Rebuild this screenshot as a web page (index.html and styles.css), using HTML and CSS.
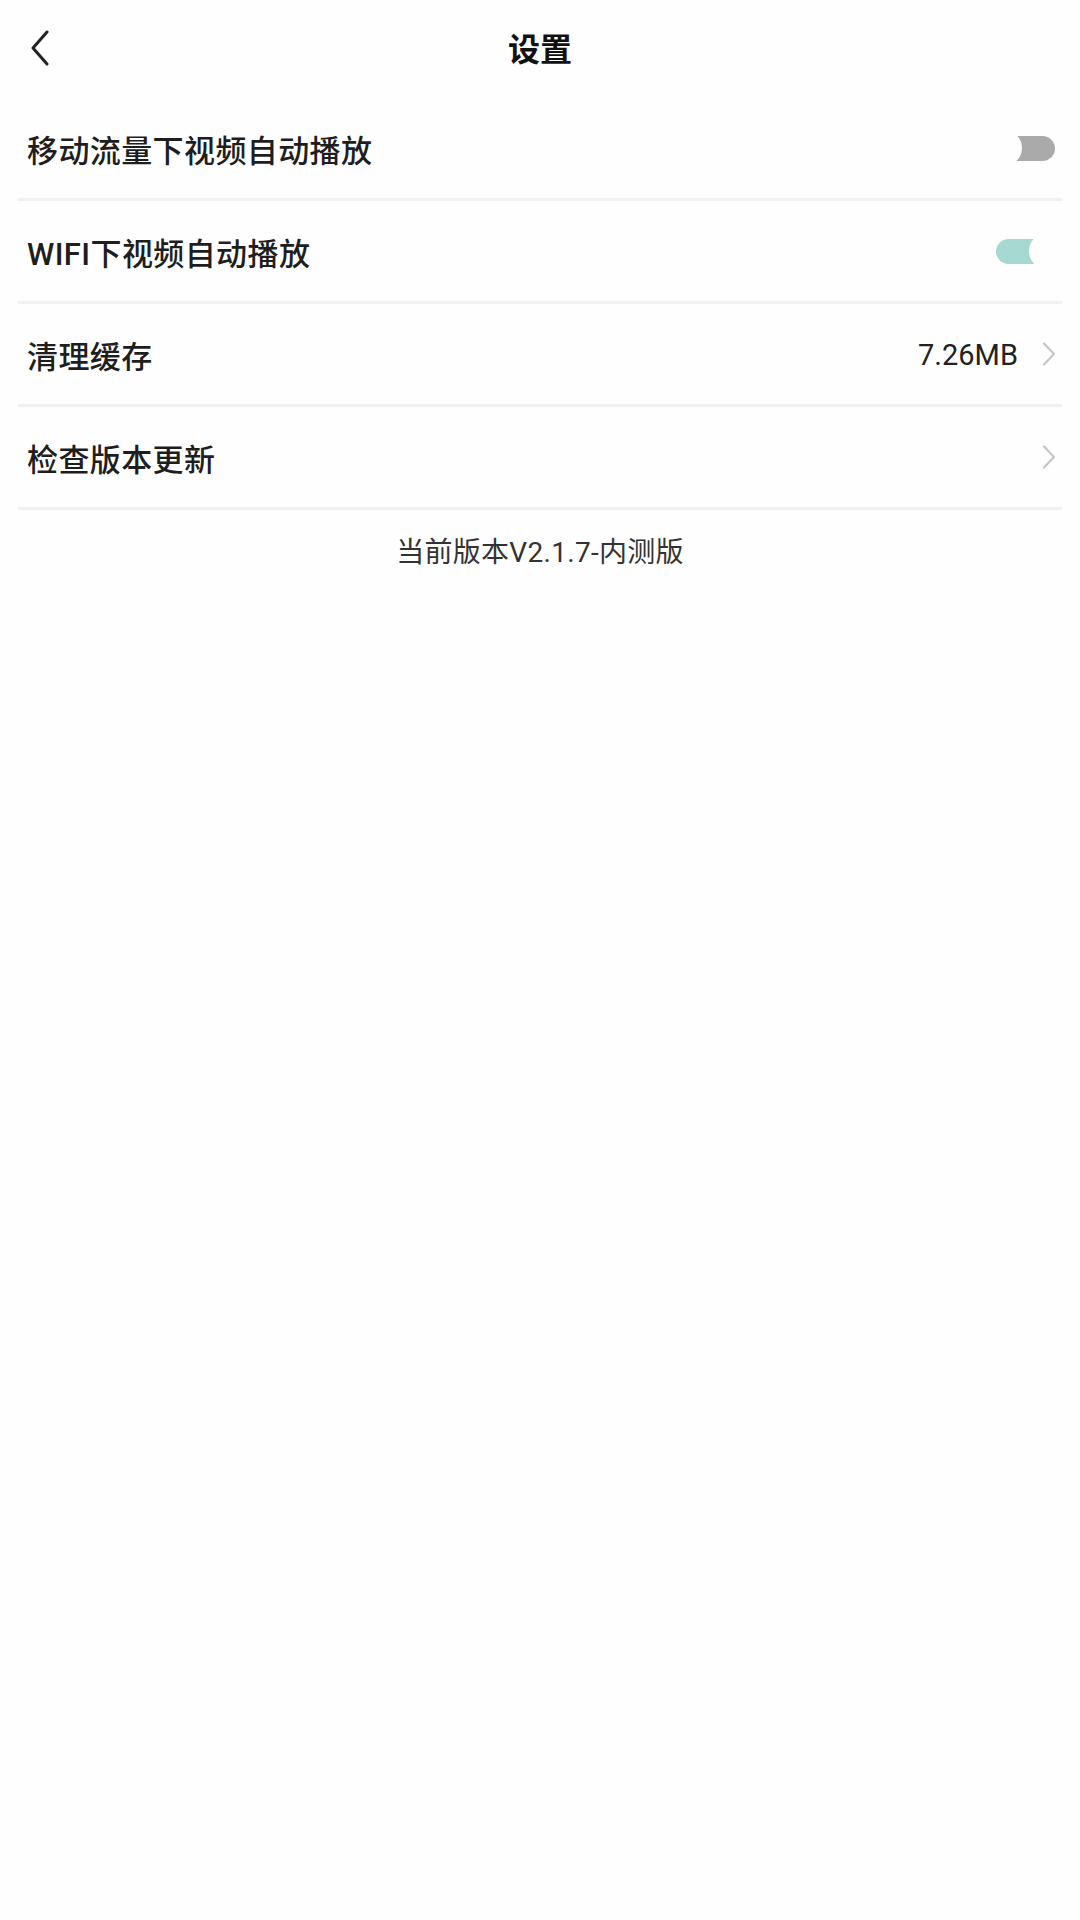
FILE: index.html
```html
<!DOCTYPE html>
<html lang="zh-CN">
<head>
<meta charset="utf-8">
<title>设置</title>
<link rel="stylesheet" href="styles.css">
</head>
<body>
<div class="page">
  <header class="topbar">
    <div class="back">
      <svg width="20" height="36" viewBox="0 0 20 36"><path d="M17 2 L3 18 L17 34" fill="none" stroke="#222" stroke-width="3" stroke-linecap="round" stroke-linejoin="round"/></svg>
    </div>
    <h1 class="title">设置</h1>
    <div class="spacer"></div>
  </header>
  <ul class="list">
    <li class="row">
      <span class="label">移动流量下视频自动播放</span>
      <span class="switch switch-off"></span>
    </li>
    <li class="row">
      <span class="label">WIFI下视频自动播放</span>
      <span class="switch switch-on"></span>
    </li>
    <li class="row">
      <span class="label">清理缓存</span>
      <span class="right">
        <span class="value">7.26MB</span>
        <svg class="arrow" width="14" height="24" viewBox="0 0 14 24"><path d="M2 1.5 L12 12 L2 22.5" fill="none" stroke="#c6c6c6" stroke-width="2.2" stroke-linecap="round" stroke-linejoin="round"/></svg>
      </span>
    </li>
    <li class="row">
      <span class="label">检查版本更新</span>
      <span class="right">
        <svg class="arrow" width="14" height="24" viewBox="0 0 14 24"><path d="M2 1.5 L12 12 L2 22.5" fill="none" stroke="#c6c6c6" stroke-width="2.2" stroke-linecap="round" stroke-linejoin="round"/></svg>
      </span>
    </li>
  </ul>
  <p class="version">当前版本V2.1.7-内测版</p>
</div>
</body>
</html>
```

FILE: styles.css
```css
* { box-sizing: border-box; }
html, body {
  margin: 0;
  padding: 0;
  background: #ffffff;
}
body {
  font-family: Roboto, "Noto Sans CJK SC", "Noto Sans", sans-serif;
  color: #1e1e1e;
}
.page {
  width: 1080px;
  min-height: 1920px;
  background: #fefefe;
}
.topbar {
  height: 98px;
  display: grid;
  grid-template-columns: 1fr auto 1fr;
  align-items: center;
}
.back {
  padding-left: 30px;
  display: flex;
  align-items: center;
  padding-bottom: 2px;
}
.back svg { display: block; }
.title {
  margin: 0 0 5px;
  font-family: "Noto Sans CJK SC", sans-serif;
  font-size: 32px;
  font-weight: 700;
  color: #111;
  line-height: 1;
}
.list {
  list-style: none;
  margin: 0 18px;
  padding: 0;
}
.row {
  height: 103px;
  border-bottom: 3px solid #f1f1f1;
  display: flex;
  align-items: center;
  justify-content: space-between;
  padding: 0 6px 0 9px;
}
.label {
  font-family: Roboto, "Noto Sans CJK SC", sans-serif;
  font-size: 31px;
  font-weight: 500;
  color: #1e1e1e;
  letter-spacing: 0.4px;
}
.right {
  display: flex;
  align-items: center;
  gap: 24px;
}
.value {
  font-family: Roboto, sans-serif;
  font-size: 29px;
  color: #222;
  margin-top: 2px;
}
.arrow { display: block; }
.switch {
  position: relative;
  width: 59px;
  height: 25px;
  border-radius: 13px;
  margin-right: 1px;
  overflow: visible;
}
.switch::after {
  content: "";
  position: absolute;
  top: -5.5px;
  width: 36px;
  height: 36px;
  border-radius: 50%;
  background: #fefefe;
}
.switch-off { background: #aaaaaa; }
.switch-off::after { left: -10px; }
.switch-on { background: #a6d9d2; }
.switch-on::after { right: -10px; }
.version {
  margin: 0;
  padding-top: 24px;
  text-align: center;
  font-family: Roboto, "Noto Sans CJK SC", sans-serif;
  font-size: 28px;
  line-height: 38px;
  color: #333;
  letter-spacing: 0.3px;
}
```
